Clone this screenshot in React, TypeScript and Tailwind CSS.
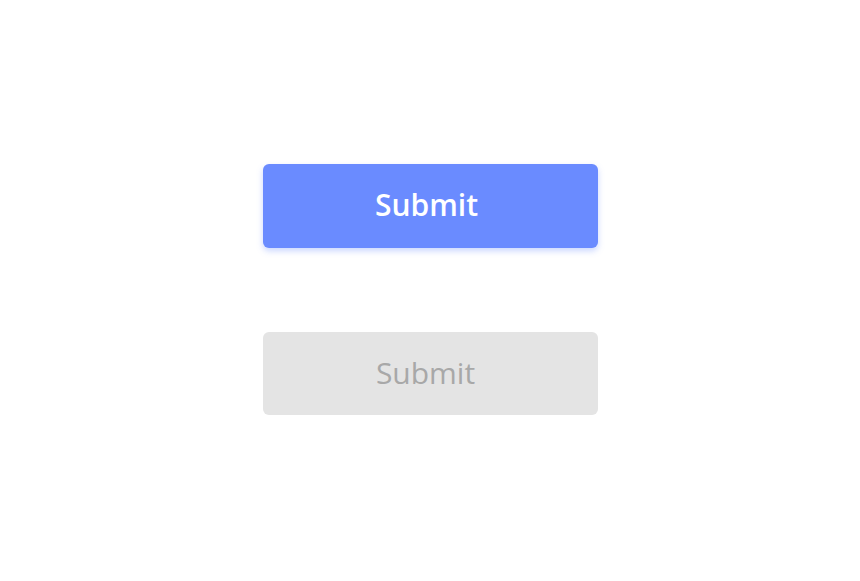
export default function App() {
  return (
    <div className="min-h-[581px] w-full bg-white flex flex-col items-center pt-[164px] gap-[84px] font-['Open_Sans',sans-serif]">
      <button className="w-[335px] h-[84px] pr-[7px] pb-[3px] rounded-[6px] bg-[#6a8bff] text-white text-[30px] font-semibold shadow-[0_3px_6px_rgba(106,139,255,0.35)]">
        Submit
      </button>
      <button
        disabled
        className="w-[335px] h-[83px] pr-[9px] pb-[2px] rounded-[6px] bg-[#e4e4e4] text-[#a8a8a8] text-[30px] font-normal"
      >
        Submit
      </button>
    </div>
  );
}
